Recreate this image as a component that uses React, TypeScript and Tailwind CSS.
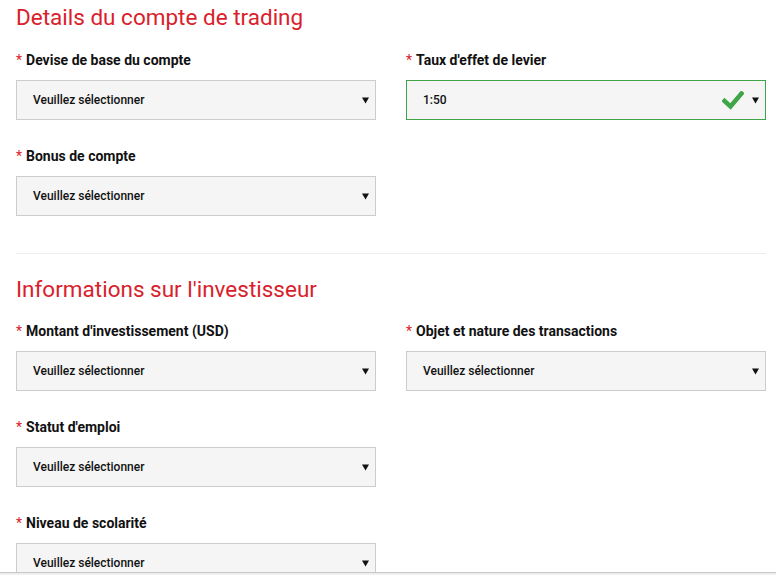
import React from 'react';

type Field = {
  label: string;
  value?: string;
  valid?: boolean;
};

function Arrow() {
  return (
    <svg width="7" height="7" viewBox="0 0 7 7" className="shrink-0">
      <path d="M0 0.5 L7 0.5 L3.5 6.5 Z" fill="#111" />
    </svg>
  );
}

function Check() {
  return (
    <svg width="22" height="19" viewBox="0 0 22 19" className="shrink-0">
      <path d="M2.5 10 L8.5 15.5 L19.5 2.5" fill="none" stroke="#3fa548" strokeWidth="4.5" strokeLinecap="square" />
    </svg>
  );
}

function SelectField({ label, value, valid }: Field) {
  return (
    <div className="flex flex-col">
      <label className="h-5 text-[14px] leading-5 font-bold text-[#111] mb-[10px] whitespace-nowrap">
        <span className="text-[#d9212b] font-normal mr-[4px]">*</span>
        {label}
      </label>
      <div
        className={
          valid
            ? 'h-10 flex items-center bg-[#f5f5f5] border border-[#3fa548] pl-4 pr-[6px]'
            : 'h-10 flex items-center bg-[#f5f5f5] border border-[#cccccc] pl-4 pr-[6px]'
        }
      >
        <span className="flex-1 text-[12px] font-medium text-[#111]">{value ?? 'Veuillez sélectionner'}</span>
        {valid && (
          <span className="mr-[8px] flex">
            <Check />
          </span>
        )}
        <Arrow />
      </div>
    </div>
  );
}

export default function App() {
  return (
    <div
      className="w-[776px] h-[575px] overflow-hidden flex flex-col bg-white"
      style={{ fontFamily: 'Roboto, "Liberation Sans", Arial, sans-serif' }}
    >
      <div className="flex-1 overflow-hidden pl-4 pr-[10px] pt-[2px]">
        {/* Trading account */}
        <section>
          <h2 className="text-[22.5px] leading-[30px] text-[#d9212b] mb-[18px]">Details du compte de trading</h2>
          <div className="grid grid-cols-[360px_360px] gap-x-[30px] gap-y-[26px]">
            <SelectField label="Devise de base du compte" />
            <SelectField label="Taux d'effet de levier" value="1:50" valid />
            <SelectField label="Bonus de compte" />
          </div>
        </section>

        <hr className="border-0 border-t border-[#eeeeee] mt-[37px] mb-[20px]" />

        {/* Investor info */}
        <section>
          <h2 className="text-[22.5px] leading-[30px] text-[#d9212b] mb-[17px]">Informations sur l'investisseur</h2>
          <div className="grid grid-cols-[360px_360px] gap-x-[30px] gap-y-[26px]">
            <SelectField label="Montant d'investissement (USD)" />
            <SelectField label="Objet et nature des transactions" />
            <SelectField label="Statut d'emploi" />
            <div />
            <SelectField label="Niveau de scolarité" />
          </div>
        </section>
      </div>
      <div className="h-[3px] shrink-0 border-t border-[#c6c6c6] bg-[#efefef]" />
    </div>
  );
}
